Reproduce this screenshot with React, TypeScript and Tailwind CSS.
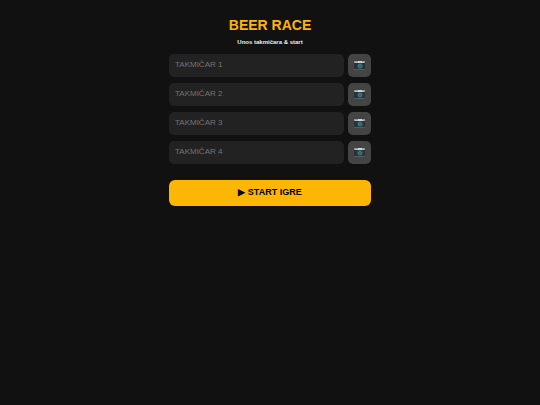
import React from "react";

const players = [1, 2, 3, 4];

const CameraIcon = () => (
  <svg viewBox="0 0 11 9" className="w-[11px] h-[9px]" aria-hidden="true">
    <rect x="0" y="0" width="11" height="9" rx="0.5" fill="#2b3236" />
    <rect x="0" y="0" width="11" height="2" fill="#8f9699" />
    <rect x="1" y="1" width="9" height="1" fill="#b9c0c3" />
    <rect x="4" y="0" width="4" height="2" fill="#ccd3d6" />
    <rect x="0" y="8" width="11" height="1" fill="#555c60" />
    <circle cx="6" cy="5" r="3" fill="#2f4c56" />
    <circle cx="6" cy="5" r="2" fill="#457b88" />
    <circle cx="6" cy="5" r="1" fill="#2f5f6b" />
  </svg>
);

const PlayerRow = ({ number }: { number: number }) => {
  return (
    <div className="flex gap-1">
      <input
        type="text"
        aria-label={`Takmičar ${number}`}
        placeholder={`TAKMIČAR ${number}`}
        className="min-w-0 flex-1 h-[23px] px-1.5 pb-0.5 rounded-[5px] bg-[#222] text-white text-[8px] placeholder:text-[#757575] outline-none"
      />
      <button
        type="button"
        aria-label={`Slika takmičara ${number}`}
        className="flex items-center justify-center w-[23px] h-[23px] rounded-[5px] bg-[#444]"
      >
        <CameraIcon />
      </button>
    </div>
  );
};

export default function App() {
  return (
    <main className="min-h-screen bg-[#111] px-4 pt-4 pb-4 text-white font-['Liberation_Sans',Arial,sans-serif]">
      <div className="mx-auto w-full max-w-[202px]">
        <h1 className="text-center text-[14px] leading-[18px] font-bold text-[#fbb606]">
          BEER RACE
        </h1>
        <p className="mt-1 text-center text-[6px] leading-2 font-bold text-[#eee]">
          Unos takmičara &amp; start
        </p>
        <form className="mt-2" onSubmit={(e) => e.preventDefault()}>
          <div className="flex flex-col gap-1.5">
            {players.map((number) => (
              <PlayerRow key={number} number={number} />
            ))}
          </div>
          <button
            type="submit"
            className="mt-4 w-full h-[26px] rounded-md bg-[#fbb606] text-black text-[9px] font-bold"
          >
            ▶ START IGRE
          </button>
        </form>
      </div>
    </main>
  );
}
